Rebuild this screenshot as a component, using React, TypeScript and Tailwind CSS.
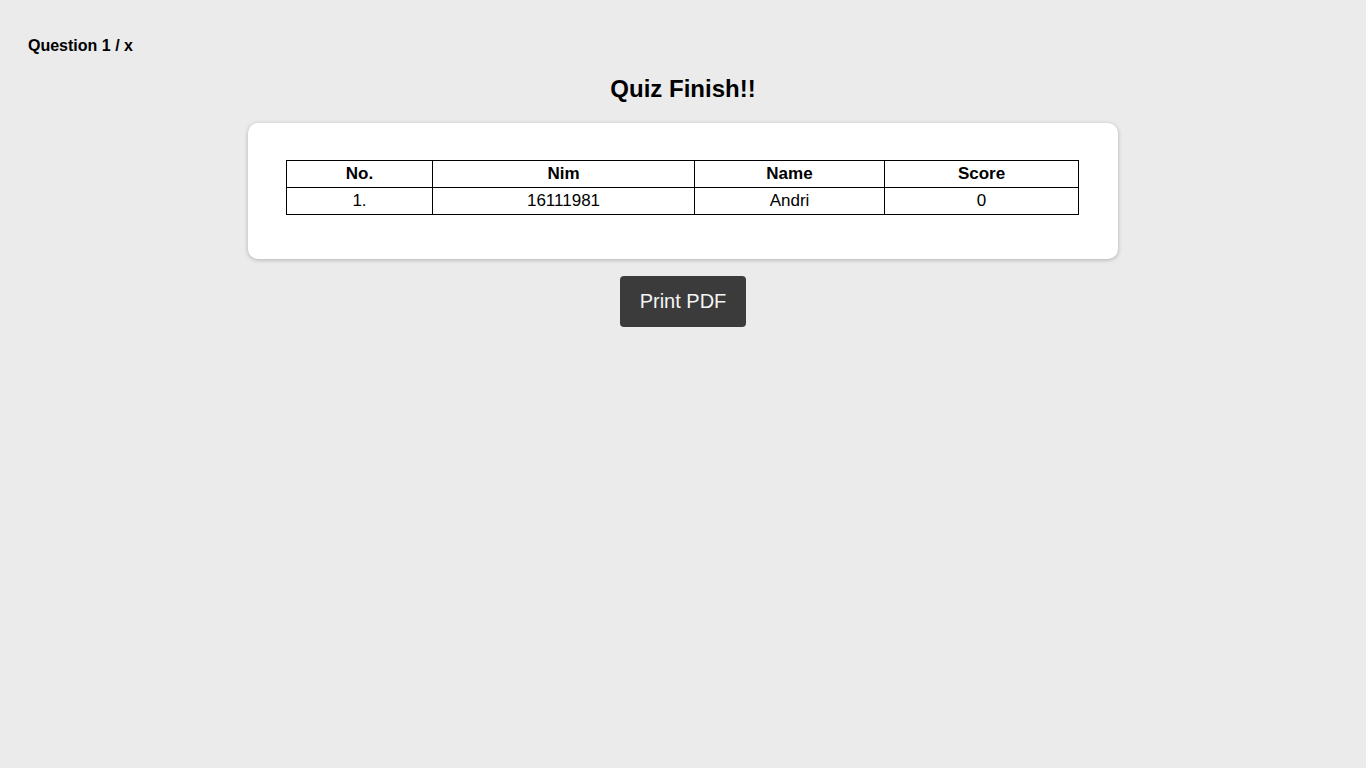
const rows = [{ no: '1.', nim: '16111981', name: 'Andri', score: '0' }];

export default function App() {
  return (
    <div className="min-h-screen bg-[#ebebeb] px-[28px] pt-[37px] font-['Liberation_Sans',Arial,sans-serif] text-black">
      <div className="text-[16px] font-bold leading-[18px]">Question 1 / x</div>
      <h1 className="mt-[20px] text-center text-[24px] font-bold leading-[28px]">Quiz Finish!!</h1>
      <div className="mx-auto mt-[20px] w-[870px] rounded-[10px] bg-white pt-[37px] pr-[39px] pb-[44px] pl-[38px] shadow-[0_1px_4px_rgba(0,0,0,0.25)]">
        <table className="w-full border-collapse text-[17px] leading-[20px]">
          <thead>
            <tr>
              <th className="h-[27px] w-[146px] border border-black p-0 font-bold">No.</th>
              <th className="h-[27px] w-[262px] border border-black p-0 font-bold">Nim</th>
              <th className="h-[27px] w-[190px] border border-black p-0 font-bold">Name</th>
              <th className="h-[27px] border border-black p-0 font-bold">Score</th>
            </tr>
          </thead>
          <tbody>
            {rows.map((r) => (
              <tr key={r.nim}>
                <td className="h-[27px] border border-black p-0 text-center">{r.no}</td>
                <td className="h-[27px] border border-black p-0 text-center">{r.nim}</td>
                <td className="h-[27px] border border-black p-0 text-center">{r.name}</td>
                <td className="h-[27px] border border-black p-0 text-center">{r.score}</td>
              </tr>
            ))}
          </tbody>
        </table>
      </div>
      <div className="mt-[17px] flex justify-center">
        <button className="h-[51px] rounded-[4px] bg-[#3b3b3b] px-[20px] text-[20px] leading-[23px] text-[#f5f5f5]">
          Print PDF
        </button>
      </div>
    </div>
  );
}
